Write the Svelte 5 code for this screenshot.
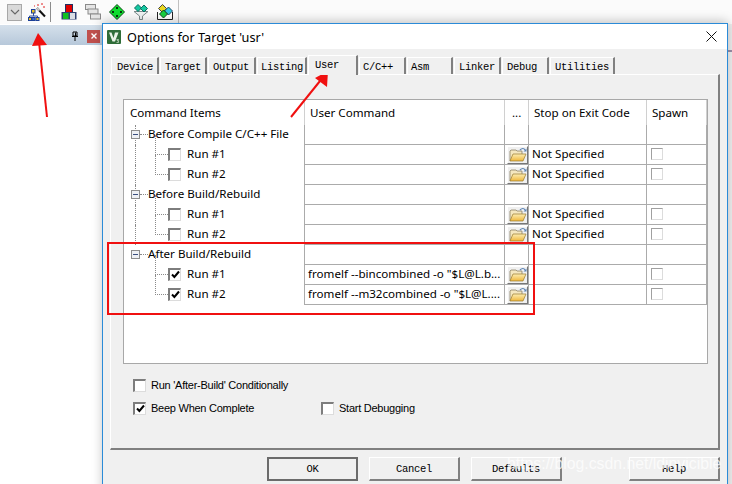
<script>
  const tabs = [
    { name: "Device", w: 48, pad: 5 },
    { name: "Target", w: 47, pad: 4 },
    { name: "Output", w: 48, pad: 4 },
    { name: "Listing", w: 50, pad: 3 },
    { name: "User", w: 50, pad: 6, active: true },
    { name: "C/C++", w: 47, pad: 3 },
    { name: "Asm", w: 46, pad: 3 },
    { name: "Linker", w: 47, pad: 4 },
    { name: "Debug", w: 47, pad: 4 },
    { name: "Utilities", w: 65, pad: 4 },
  ];

  const NS = "Not Specified";
  const rows = [
    { group: "Before Compile C/C++ File", more: true },
    { run: "Run #1", folder: true, stop: NS, spawn: true, more: true },
    { run: "Run #2", folder: true, stop: NS, spawn: true, more: true },
    { group: "Before Build/Rebuild", more: true },
    { run: "Run #1", folder: true, stop: NS, spawn: true, more: true },
    { run: "Run #2", folder: true, stop: NS, spawn: true, more: true },
    { group: "After Build/Rebuild" },
    { run: "Run #1", checked: true, cmd: 'fromelf --bincombined -o "$L@L.b...', folder: true, spawn: true },
    { run: "Run #2", checked: true, cmd: 'fromelf --m32combined -o "$L@L....', folder: true, spawn: true },
  ];
</script>

{#snippet check()}
  <svg class="tick" viewBox="0 0 9 9" width="9" height="9"><path d="M1 4.5 3.4 7 8 1.5" fill="none" stroke="#000" stroke-width="2" /></svg>
{/snippet}

{#snippet folder()}
  <span class="folder">
    <svg viewBox="0 0 18 15" width="18" height="15">
      <path d="M1 14V4l1-1h5l1 1h5v3" fill="#f4e7c0" stroke="#8d8468" stroke-width=".8" />
      <path d="M1 14 4 7h13l-3 7z" fill="url(#fold)" stroke="#9a7a2c" stroke-width=".7" />
      <path d="M11 3c2-2 4-2 5 0" fill="none" stroke="#5d84b5" stroke-width="1.2" />
      <path d="M17.5 1.5v3h-3z" fill="#5d84b5" />
    </svg>
  </span>
{/snippet}

<div class="screen">
  <svg width="0" height="0" class="defs">
    <defs>
      <linearGradient id="fold" x1="0" y1="0" x2="0" y2="1">
        <stop offset="0" stop-color="#fdeeb4" />
        <stop offset="1" stop-color="#efb73d" />
      </linearGradient>
    </defs>
  </svg>

  <div class="toolbar">
    <span class="combo">
      <svg viewBox="0 0 10 6" width="10" height="6"><path d="M1 1l4 4 4-4" fill="none" stroke="#666" stroke-width="1.1" /></svg>
    </span>
    <svg class="tool wand" viewBox="0 0 18 20" width="18" height="20">
      <path d="M5.500 10v4M1.500 17v-3h8v3" fill="none" stroke="#2b4f9e" />
      <rect x="3.500" y="7.500" width="3.500" height="3.500" fill="#e8c020" stroke="#1c3f96" />
      <rect x=".5" y="15.500" width="3" height="3" fill="#e8c020" stroke="#1c3f96" />
      <rect x="4" y="15.500" width="3" height="3" fill="#3c6fd0" stroke="#1c3f96" />
      <rect x="8" y="15.500" width="3" height="3" fill="#e8c020" stroke="#1c3f96" />
      <path d="M9 6l8 8.500" stroke="#111" stroke-width="2" />
      <path d="M9 6l2.500 2.500" stroke="#ccc" stroke-width="2" />
      <path d="M9 3h2M13 2h2M15 5h2M6 4h1" stroke="#e02020" />
    </svg>
    <span class="sep"></span>
    <svg class="tool build" viewBox="0 0 16 16" width="16" height="16">
      <rect x="4.500" y=".5" width="7" height="8" fill="#e00000" stroke="#223060" />
      <rect x=".5" y="8" width="15" height="7.500" fill="#2f3f70" />
      <rect x="2" y="9" width="5.500" height="6" fill="#10c020" />
      <rect x="9" y="9" width="5" height="6" fill="#d8dce4" />
    </svg>
    <svg class="tool windows" viewBox="0 0 16 16" width="16" height="16">
      <rect x=".5" y=".5" width="10" height="5" fill="#e4e4e4" stroke="#8a8a8a" />
      <rect x="3" y="5" width="10" height="5" fill="#e4e4e4" stroke="#8a8a8a" />
      <rect x="5.500" y="10" width="10" height="5" fill="#e4e4e4" stroke="#8a8a8a" />
    </svg>
    <svg class="tool diamond" viewBox="0 0 16 16" width="16" height="16">
      <path d="M8 .5 15.500 8 8 15.500 .5 8z" fill="#10e030" stroke="#0a4a14" />
      <path d="M8 3v2M7 4h2M8 11v2M7 12h2M3 8h2M4 7v2M11 8h2M12 7v2" stroke="#000" />
    </svg>
    <svg class="tool funnel" viewBox="0 0 16 16" width="16" height="16">
      <path d="M1 7.500h14L9.500 12v3.500h-3V12z" fill="#eef2f2" stroke="#7d8a8a" />
      <path d="M5 .5 8.500 4 5 7.500 1.500 4z" fill="#14c8a0" stroke="#0c6a60" />
      <path d="M11 1 14.500 4.500 11 8 7.500 4.500z" fill="#14c8a0" stroke="#0c6a60" />
    </svg>
    <svg class="tool multi" viewBox="0 0 16 16" width="16" height="16">
      <path d="M.5 8v7.500h15V8" fill="#fff" stroke="#222" />
      <path d="M5.500 .5 9.500 4.500 5.500 8.500 1.500 4.500z" fill="#e8d820" stroke="#444" />
      <path d="M11.500 3 15.500 7 11.500 11 7.500 7z" fill="#30c8e0" stroke="#246" />
      <path d="M6.500 6 10.500 10 6.500 14 2.500 10z" fill="#18d040" stroke="#142" />
    </svg>
    <span class="sep end"></span>
  </div>

  <div class="back">
    <div class="pane">
      <div class="pane-head">
        <svg class="pin" viewBox="0 0 8 10" width="8" height="10"><path d="M2 1h4v4H2zM1 5.500h6M4 6v4" fill="none" stroke="#000" /><path d="M4.500 1.500v3.500" stroke="#000" /></svg>
        <span class="pane-close">
          <svg viewBox="0 0 6 6" width="6" height="6"><path d="M.5.5l5 5M5.500.5l-5 5" stroke="#fff" stroke-width="1.400" /></svg>
        </span>
      </div>
    </div>
    <div class="side"></div>
  </div>

  <section class="dialog">
    <header class="titlebar">
      <svg class="appicon" viewBox="0 0 14 14" width="14" height="14">
        <rect width="14" height="14" rx="1" fill="#2f6d38" />
        <path d="M2 2.500h2.500L6.500 8 8 2.500h3.500L8 11.500H5.500z" fill="#e9f2e6" />
        <path d="M9.500 9.500h2v.8h-1.200v.6h1.200v1.600h-2" fill="none" stroke="#e9f2e6" stroke-width=".6" />
      </svg>
      <span class="title">Options for Target 'usr'</span>
      <svg class="close" viewBox="0 0 11 11" width="11" height="11"><path d="M.5.5l10 10M10.500.5l-10 10" stroke="#111" stroke-width="1" /></svg>
    </header>

    <nav class="tabs">
      {#each tabs as tab}
        <span class="tab" class:active={tab.active} style:width="{tab.w}px" style:padding-left="{tab.pad}px">{tab.name}</span>
      {/each}
    </nav>

    <div class="panel">
      <div class="list">
        <div class="cell head first">Command Items</div>
        <div class="cell head">User Command</div>
        <div class="cell head dots">...</div>
        <div class="cell head">Stop on Exit Code</div>
        <div class="cell head">Spawn</div>

        {#each rows as row}
          <div class="cell first tree" class:more={row.more}>
            {#if row.group}
              <span class="expander"></span>
              <span class="hdots"></span>
              <span class="group">{row.group}</span>
            {:else}
              <span class="child">
                <span class="box">
                  {#if row.checked}{@render check()}{/if}
                </span>
                <span class="label">{row.run}</span>
              </span>
            {/if}
          </div>
          <div class="cell line cmd"><span class="label">{row.cmd ?? ""}</span></div>
          <div class="cell line">
            {#if row.folder}{@render folder()}{/if}
          </div>
          <div class="cell line stop"><span class="label">{row.stop ?? ""}</span></div>
          <div class="cell line spawn">
            {#if row.spawn}<span class="box small"></span>{/if}
          </div>
        {/each}
      </div>

      <div class="options">
        <label class="opt"><span class="box"></span>Run 'After-Build' Conditionally</label>
        <div class="opt-row">
          <label class="opt beep"><span class="box">{@render check()}</span>Beep When Complete</label>
          <label class="opt"><span class="box"></span>Start Debugging</label>
        </div>
      </div>
    </div>

    <footer class="buttons">
      <button class="default">OK</button>
      <button>Cancel</button>
      <button>Defaults</button>
      <button class="help">Help</button>
    </footer>
  </section>

  <svg class="marks" viewBox="0 0 732 484" width="732" height="484">
    <rect x="108" y="243" width="426" height="71" fill="none" stroke="#f01010" stroke-width="2" />
    <path d="M47 117 39 42" stroke="#f01010" stroke-width="2" />
    <path d="M38 33 47 45 32 46z" fill="#f01010" />
    <path d="M291 117 320 81" stroke="#f01010" stroke-width="2" />
    <path d="M328 71 327 87 315 78z" fill="#f01010" />
  </svg>
  <span class="watermark">https://blog.csdn.net/ldinvicible</span>
</div>

<style>
  :global(body) {
    background: #fff;
  }

  .screen {
    position: relative;
    width: 732px;
    height: 484px;
    overflow: hidden;
    font-family: "Noto Sans", Tahoma, sans-serif;
    font-size: 11.6px;
    color: #000;
  }

  .defs {
    position: absolute;
  }

  .toolbar {
    display: flex;
    align-items: center;
    height: 24px;
    padding-left: 7px;
    background: #fbfbfb;
  }

  .combo {
    display: flex;
    align-items: center;
    justify-content: center;
    box-sizing: border-box;
    width: 15px;
    height: 17px;
    margin-right: 6px;
    background: #d9d9d9;
    border: 1px solid #a8a8a8;
  }

  .sep {
    width: 1px;
    height: 20px;
    margin: 0 10px 0 4px;
    background: #8c8c8c;
  }

  .sep.end {
    height: 24px;
    margin-left: -3px;
    background: #c0c0c0;
  }

  .tool {
    flex: none;
    margin-right: 8px;
  }

  .tool.wand {
    margin-right: 0;
  }

  .back {
    display: flex;
    height: 460px;
  }

  .pane {
    flex: 1;
  }

  .pane-head {
    display: flex;
    align-items: center;
    justify-content: flex-end;
    gap: 8px;
    box-sizing: border-box;
    height: 20px;
    margin-top: 1px;
    padding: 2px 629px 0 0;
    background: linear-gradient(#d5e0eb, #b7c8da);
  }

  .pane-close {
    display: flex;
    align-items: center;
    justify-content: center;
    width: 13px;
    height: 13px;
    margin-right: -1px;
    background: #c0504d;
  }

  .side {
    width: 4px;
    background: linear-gradient(#ededed 0 26px, #9a8fa8 26px 28px, #f0f0f0 28px);
  }

  .dialog {
    position: absolute;
    left: 102px;
    top: 23px;
    box-sizing: border-box;
    width: 626px;
    height: 480px;
    background: #f0f0f0;
    border: 1px solid #2b8bd8;
    box-shadow: 0 -2px 10px rgba(0, 0, 0, 0.22);
  }

  .titlebar {
    display: flex;
    align-items: center;
    height: 25px;
    padding: 0 10px 0 4px;
    background: #fff;
  }

  .appicon {
    margin-right: 6px;
  }

  .title {
    flex: 1;
    font-size: 12.7px;
  }

  .tabs {
    display: flex;
    align-items: flex-end;
    height: 17px;
    margin: 8px 0 0 8px;
    font-family: "Liberation Mono", monospace;
    font-size: 10.5px;
    letter-spacing: -0.3px;
  }

  .tab {
    box-sizing: border-box;
    flex: none;
    height: 17px;
    margin-right: 1px;
    padding-top: 3px;
    line-height: 12px;
    white-space: nowrap;
    background: #f0f0f0;
    border-top: 1px solid #fff;
    border-left: 1px solid #fff;
    border-right: 2px solid #808080;
  }

  .tab.active {
    position: relative;
    z-index: 1;
    height: 20px;
    margin-bottom: -1px;
  }

  .panel {
    box-sizing: border-box;
    width: 610px;
    height: 376px;
    margin-left: 7px;
    padding: 24px 0 0 12px;
    background: #f0f0f0;
    border-top: 1px solid #fff;
    border-left: 1px solid #fff;
    border-right: 2px solid #808080;
    border-bottom: 2px solid #808080;
  }

  .list {
    display: grid;
    grid-template-columns: 181px 200px 24px 118px 60px;
    grid-template-rows: 25px repeat(9, 20px);
    align-content: start;
    box-sizing: border-box;
    width: 585px;
    height: 265px;
    background: #fff;
    border: 1px solid #a8a8a8;
  }

  .cell {
    display: flex;
    align-items: center;
    box-sizing: border-box;
    min-width: 0;
    white-space: nowrap;
    overflow: hidden;
    padding-left: 2px;
    border-right: 1px solid #ababab;
  }

  .cell.head {
    align-items: flex-start;
    padding: 5px 0 0 5px;
    border-right-color: #d0d0d0;
  }

  .cell.head.first {
    padding-left: 6px;
  }

  .cell.dots {
    padding-left: 7px;
  }

  .cell.line {
    border-bottom: 1px solid #ababab;
  }

  .cell.cmd,
  .cell.stop {
    padding-left: 3px;
    padding-bottom: 1px;
  }

  .cell.spawn {
    padding-bottom: 2px;
  }

  .label,
  .group {
    position: relative;
    top: -1px;
  }

  .tree {
    position: relative;
    padding-left: 7px;
    padding-bottom: 2px;
    overflow: visible;
  }

  .tree.more::before {
    content: "";
    position: absolute;
    left: 11px;
    top: 0;
    bottom: 0;
    border-left: 1px dotted #8a8a8a;
  }

  .expander {
    position: relative;
    z-index: 1;
    box-sizing: border-box;
    width: 9px;
    height: 9px;
    background: linear-gradient(#3b4f80, #3b4f80) center / 5px 1px no-repeat #eef0f4;
    border: 1px solid #8d8d8d;
  }

  .hdots {
    width: 8px;
    border-top: 1px dotted #8a8a8a;
  }

  .child {
    position: relative;
    display: flex;
    align-items: center;
    gap: 6px;
    padding-left: 37px;
    height: 100%;
  }

  .child::before {
    content: "";
    position: absolute;
    left: 24px;
    top: -10px;
    width: 12px;
    height: 19px;
    border-left: 1px dotted #8a8a8a;
    border-bottom: 1px dotted #8a8a8a;
  }

  .box {
    display: inline-flex;
    align-items: center;
    justify-content: center;
    box-sizing: border-box;
    flex: none;
    width: 13px;
    height: 13px;
    background: #fff;
    border-top: 2px solid #7d7d7d;
    border-left: 2px solid #7d7d7d;
    border-right: 1px solid #dcdcdc;
    border-bottom: 1px solid #dcdcdc;
  }

  .box.small {
    width: 12px;
    height: 12px;
    margin-left: 2px;
    border: 1px solid #a0a0a0;
    border-right-color: #dcdcdc;
    border-bottom-color: #dcdcdc;
  }

  .folder {
    display: flex;
    align-items: center;
    justify-content: center;
    box-sizing: border-box;
    width: 21px;
    height: 18px;
    background: #f0f0f0;
    border-top: 1px solid #fff;
    border-left: 1px solid #fff;
    border-right: 1px solid #777;
    border-bottom: 1px solid #777;
  }

  .options {
    display: flex;
    flex-direction: column;
    gap: 9px;
    margin: 14px 0 0 10px;
    font-family: "Liberation Sans", Arial, sans-serif;
    font-size: 11px;
    letter-spacing: -0.25px;
  }

  .opt {
    display: flex;
    align-items: center;
    gap: 5px;
    height: 14px;
  }

  .opt-row {
    display: flex;
  }

  .opt.beep {
    width: 188px;
  }

  .buttons {
    display: flex;
    gap: 11px;
    margin: 7px 0 0 164px;
  }

  button {
    box-sizing: border-box;
    width: 91px;
    height: 24px;
    padding: 0;
    font-family: "Liberation Mono", monospace;
    font-size: 10.5px;
    letter-spacing: -0.3px;
    background: #f0f0f0;
    border-top: 1px solid #fff;
    border-left: 1px solid #fff;
    border-right: 2px solid #808080;
    border-bottom: 2px solid #808080;
  }

  button.default {
    border: 2px solid #6b6b6b;
  }

  button.help {
    margin-left: 56px;
  }

  .marks {
    position: absolute;
    left: 0;
    top: 0;
    pointer-events: none;
  }

  .watermark {
    position: absolute;
    left: 507px;
    top: 455px;
    font-family: "Liberation Sans", sans-serif;
    font-size: 15.8px;
    color: rgba(255, 255, 255, 0.75);
  }
</style>
